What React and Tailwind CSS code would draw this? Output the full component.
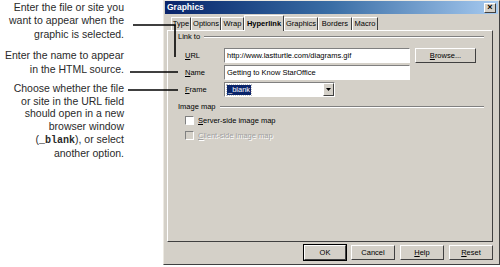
import React from "react";

const U = ({ children }) => <span className="underline">{children}</span>;

function Btn({ children, w, def }) {
  return (
    <div
      className={`h-[17px] ${w} flex items-center justify-center ${
        def ? "border border-black" : "border border-transparent"
      }`}
    >
      <div className="w-full h-full border-t border-l border-white border-r border-b border-r-[#404040] border-b-[#404040] flex items-center justify-center text-[7.5px] text-black">
        {children}
      </div>
    </div>
  );
}

function Tab({ children, w, active }) {
  return active ? (
    <div
      className={`${w} h-[16px] relative z-10 bg-[#d4d0c8] border-t border-l border-white border-r border-r-[#404040] flex items-center justify-center font-bold text-[7.5px] rounded-t-[1px]`}
    >
      {children}
    </div>
  ) : (
    <div
      className={`${w} h-[13px] mt-[2px] border-t border-l border-white border-r border-r-[#404040] flex items-center justify-center text-[7.5px]`}
    >
      {children}
    </div>
  );
}

function Legend({ children }) {
  return (
    <div className="flex items-center h-[12px] pl-[10px] pr-[8px]">
      <span className="text-[7.5px] pr-[4px]">{children}</span>
      <div className="flex-1 flex flex-col">
        <div className="h-[1px] bg-[#808080]" />
        <div className="h-[1px] bg-white" />
      </div>
    </div>
  );
}

export default function App() {
  return (
    <div
      className="w-[500px] h-[267px] bg-white relative flex overflow-hidden text-black"
      style={{ fontFamily: '"Liberation Sans", Arial, sans-serif' }}
    >
      {/* callout text */}
      <div className="w-[163px] shrink-0 pr-[39px] text-right text-[10.5px] text-[#2a2a2a]">
        <p className="leading-[13.3px] mt-[1px]">
          Enter the file or site you
          <br />
          want to appear when the
          <br />
          graphic is selected.
        </p>
        <p className="leading-[14.5px] mt-[7px]">
          Enter the name to appear
          <br />
          in the HTML source.
        </p>
        <p className="leading-[12.7px] mt-[5px]">
          Choose whether the file
          <br />
          or site in the URL field
          <br />
          should open in a new
          <br />
          browser window
          <br />
          (
          <span
            className="font-bold text-[10px]"
            style={{ fontFamily: '"Liberation Mono", monospace' }}
          >
            _blank
          </span>
          ), or select
          <br />
          another option.
        </p>
      </div>

      {/* dialog */}
      <div className="w-[337px] h-[265px] shrink-0 bg-[#d4d0c8] border-l border-t border-[#ece9e2] border-r border-b border-r-[#404040] border-b-[#404040] flex flex-col">
        <div className="h-[13px] mx-[1px] bg-gradient-to-r from-[#0a246a] via-[#3a6ea5] to-[#a6caf0] flex items-center justify-between pl-[2px] pr-[2px]">
          <span className="text-white font-bold text-[8.5px]">Graphics</span>
          <div className="w-[12px] h-[10px] bg-[#d4d0c8] border-t border-l border-white border-r border-b border-r-[#404040] border-b-[#404040] flex items-center justify-center text-[9px] font-bold leading-none">
            ×
          </div>
        </div>

        {/* tabs */}
        <div className="flex mt-[1px] ml-[7px] h-[15px] items-start">
          <Tab w="w-[20px]">Type</Tab>
          <Tab w="w-[30px]">Options</Tab>
          <Tab w="w-[23px]">Wrap</Tab>
          <Tab w="w-[40px]" active>
            Hyperlink
          </Tab>
          <Tab w="w-[34px]">Graphics</Tab>
          <Tab w="w-[34px]">Borders</Tab>
          <Tab w="w-[26px]">Macro</Tab>
        </div>

        {/* panel */}
        <div className="ml-[3px] w-[326px] h-[212px] border-t border-l border-white border-r border-b border-r-[#404040] border-b-[#404040] text-[7.5px]">
          <Legend>Link to</Legend>
          <div className="mt-[4px] flex flex-col">
            <div className="flex items-center h-[17px]">
              <span className="w-[56px] pl-[17px]">
                <U>U</U>RL
              </span>
              <div className="w-[186px] h-[15px] bg-white border-t border-l border-[#808080] border-r border-b border-r-white border-b-white flex items-center pl-[2px] overflow-hidden whitespace-nowrap">
                http://www.lastturtle.com/diagrams.gif
              </div>
              <div className="ml-[4px]">
                <Btn w="w-[63px]">
                  <span>
                    <U>B</U>rowse...
                  </span>
                </Btn>
              </div>
            </div>
            <div className="flex items-center h-[17px]">
              <span className="w-[56px] pl-[17px]">
                <U>N</U>ame
              </span>
              <div className="w-[186px] h-[15px] bg-white border-t border-l border-[#808080] border-r border-b border-r-white border-b-white flex items-center pl-[2px]">
                Getting to Know StarOffice
              </div>
            </div>
            <div className="flex items-center h-[17px]">
              <span className="w-[56px] pl-[17px]">
                <U>F</U>rame
              </span>
              <div className="w-[111px] h-[15px] bg-white border-t border-l border-[#808080] border-r border-b border-r-white border-b-white flex items-center pl-[2px] justify-between">
                <span className="bg-[#0a246a] text-white px-[1px] leading-[10px] outline outline-1 outline-dotted outline-[#c0c0c0]">
                  _blank
                </span>
                <div className="w-[11px] h-[13px] bg-[#d4d0c8] border-t border-l border-white border-r border-b border-r-[#404040] border-b-[#404040] flex items-center justify-center">
                  <svg width="5" height="3" viewBox="0 0 5 3">
                    <path d="M0 0h5L2.5 3z" fill="#000" />
                  </svg>
                </div>
              </div>
            </div>
          </div>

          <div className="mt-[3px]">
            <Legend>Image map</Legend>
          </div>
          <div className="flex flex-col">
            <div className="flex items-center h-[15px] pl-[17px]">
              <div className="w-[9px] h-[9px] bg-white border-t border-l border-[#808080] border-r border-b border-r-white border-b-white mr-[4px]" />
              <span>
                <U>S</U>erver-side image map
              </span>
            </div>
            <div className="flex items-center h-[15px] pl-[17px] text-[#a0a0a0]">
              <div className="w-[9px] h-[9px] bg-[#d4d0c8] border-t border-l border-[#808080] border-r border-b border-r-white border-b-white mr-[4px]" />
              <span style={{ textShadow: "1px 1px 0 #fff" }}>
                <U>C</U>lient-side image map
              </span>
            </div>
          </div>
        </div>

        {/* buttons */}
        <div className="flex justify-end gap-[3px] mt-[2px] mr-[5px]">
          <Btn w="w-[44px]" def>
            OK
          </Btn>
          <Btn w="w-[46px]">Cancel</Btn>
          <Btn w="w-[46px]">
            <span>
              <U>H</U>elp
            </span>
          </Btn>
          <Btn w="w-[46px]">
            <span>
              <U>R</U>eset
            </span>
          </Btn>
        </div>
      </div>

      {/* callout lines */}
      <svg
        className="absolute left-0 top-0 pointer-events-none"
        width="500"
        height="267"
      >
        <polyline
          points="133,25 175,25 175,57"
          fill="none"
          stroke="#000"
          strokeWidth="1.6"
        />
        <line x1="130" y1="72" x2="178" y2="72" stroke="#000" strokeWidth="1.6" />
        <line x1="128" y1="90" x2="178" y2="90" stroke="#000" strokeWidth="1.6" />
      </svg>
    </div>
  );
}
